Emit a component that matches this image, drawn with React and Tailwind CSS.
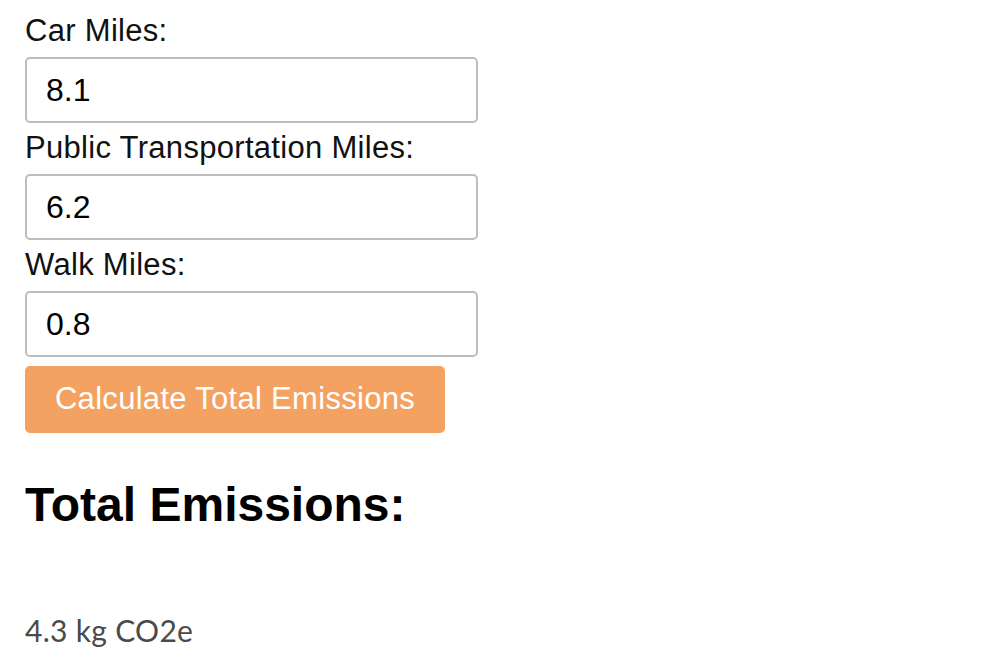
import React from "react";

function Field({ label, value }) {
  return (
    <div className="flex flex-col">
      <label className="text-[31px] leading-[35px] tracking-[0.3px] text-[#111] mb-[9px]">{label}</label>
      <input
        type="text"
        defaultValue={value}
        className="w-[453px] h-[66px] border-2 border-[#bdbdbd] rounded-[5px] pl-[19px] text-[32px] text-black outline-none mb-[7px] bg-white"
        style={{ fontFamily: '"Liberation Sans", Arial, sans-serif' }}
      />
    </div>
  );
}

export default function App() {
  return (
    <div
      className="w-[994px] h-[664px] bg-white pl-[25px] pt-[13px] overflow-hidden"
      style={{ fontFamily: '"Liberation Sans", Arial, sans-serif' }}
    >
      <Field label="Car Miles:" value="8.1" />
      <Field label="Public Transportation Miles:" value="6.2" />
      <Field label="Walk Miles:" value="0.8" />
      <button className="mt-[2px] w-[420px] h-[67px] bg-[#f4a261] rounded-[5px] text-white text-[31px] tracking-[0.3px] text-center">
        Calculate Total Emissions
      </button>
      <h2 className="mt-[44px] text-[48px] leading-[55px] font-bold text-black">Total Emissions:</h2>
      <p
        className="mt-[80px] text-[30px] leading-[36px] tracking-[0.3px] font-normal text-[#4a4a4a]"
        style={{ fontFamily: 'Lato, sans-serif' }}
      >
        4.3 kg CO2e
      </p>
    </div>
  );
}
